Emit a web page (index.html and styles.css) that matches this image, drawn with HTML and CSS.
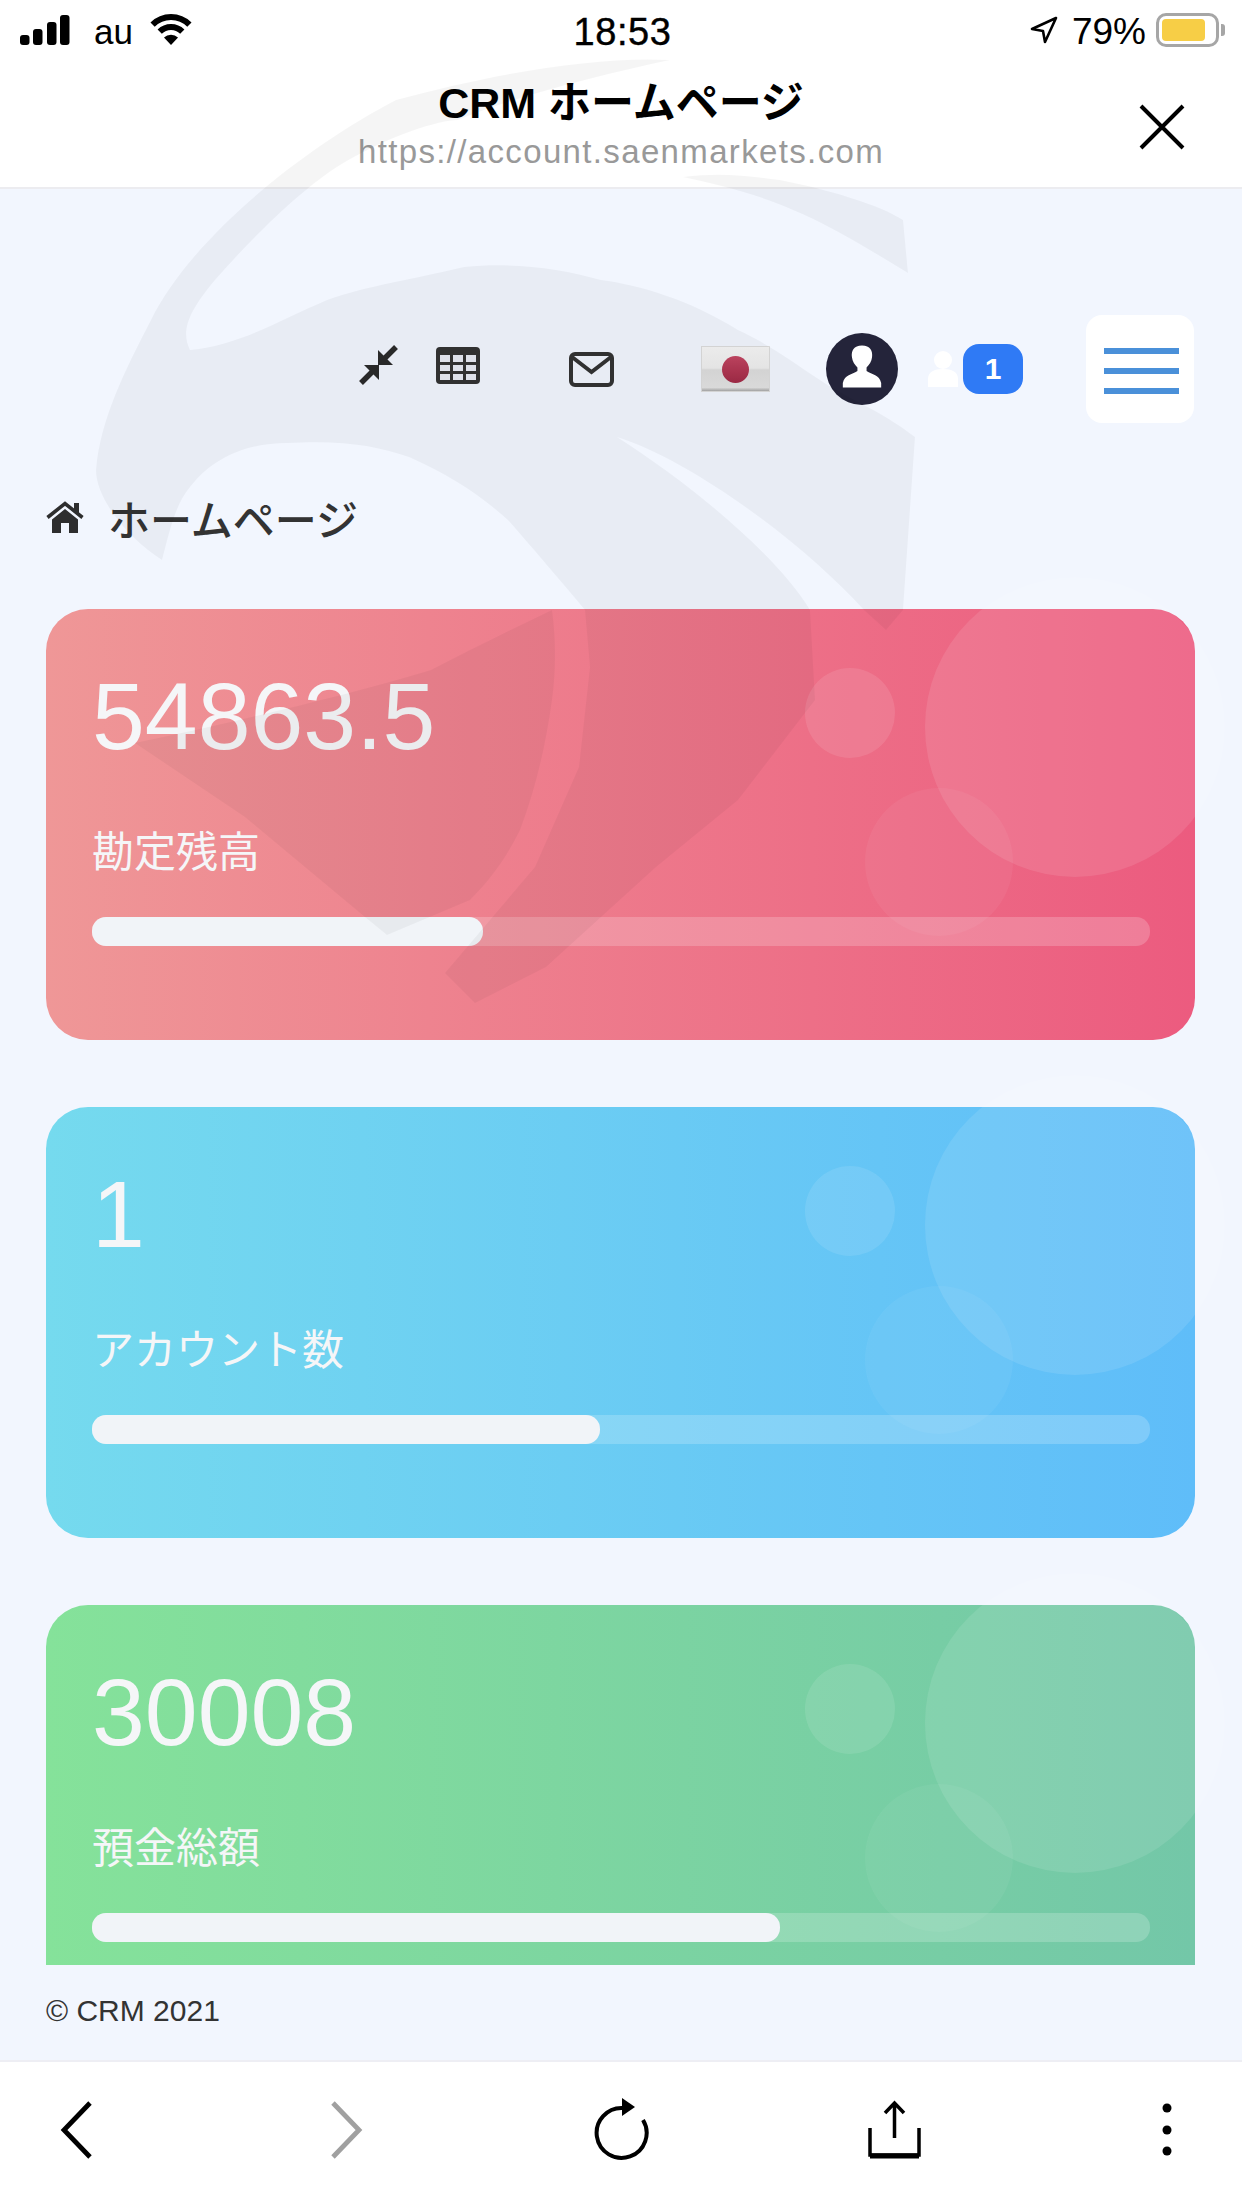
FILE: index.html
```html
<!DOCTYPE html>
<html lang="ja">
<head>
    <meta charset="UTF-8">
    <meta name="viewport" content="width=device-width, initial-scale=1.0">
    <title>CRM ホームページ</title>
    <link rel="stylesheet" href="styles.css">
</head>
<body>
    <!-- phone status bar -->
    <div class="status_bar">
        <div class="status_left">
            <svg class="signal" viewBox="0 0 50 30"><rect x="0" y="20" width="9.5" height="10" rx="3"/><rect x="13" y="14" width="9.5" height="16" rx="3"/><rect x="27" y="7" width="9.5" height="23" rx="3"/><rect x="40" y="0" width="9.5" height="30" rx="3"/></svg>
            <span class="carrier">au</span>
            <svg class="wifi" viewBox="0 0 44 32"><path d="M3.6 11.6A26 26 0 0 1 40.4 11.6M10.7 18.7A16 16 0 0 1 33.3 18.7" fill="none" stroke="#000" stroke-width="6"/><path d="M22 32L15 24.5A10 10 0 0 1 29 24.5Z"/></svg>
        </div>
        <div class="clock">18:53</div>
        <div class="status_right">
            <svg class="location" viewBox="0 0 28 28"><path d="M26 2L2 13L13 15L15 26Z" fill="none" stroke="#000" stroke-width="2.6" stroke-linejoin="round"/></svg>
            <span class="percent">79%</span>
            <div class="battery"><div class="battery_fill"></div></div>
            <div class="battery_nub"></div>
        </div>
    </div>

    <!-- in-app browser title -->
    <div class="title_bar">
        <div></div>
        <div class="title_text">
            <div class="page_title">CRM ホームページ</div>
            <div class="page_url">https://account.saenmarkets.com</div>
        </div>
        <svg class="close_icon" viewBox="0 0 46 46"><path d="M2 2L44 44M44 2L2 44" stroke="#000" stroke-width="4" fill="none"/></svg>
    </div>

    <div class="main">
        <div class="toolbar">
            <svg class="tool_compress" viewBox="0 0 41 42" fill="#2b2b2b"><path d="M20 6V21H35Z"/><path d="M6 21H21V36Z"/><path d="M25 16L38 3M16 26L3 39" stroke="#2b2b2b" stroke-width="5.5" fill="none"/></svg>
            <svg class="tool_table" viewBox="0 0 44 37"><rect width="44" height="37" rx="4" fill="#333"/><g fill="#e8ebf4"><rect x="4" y="8" width="10" height="7"/><rect x="17" y="8" width="10" height="7"/><rect x="30" y="8" width="10" height="7"/><rect x="4" y="18" width="10" height="6"/><rect x="17" y="18" width="10" height="6"/><rect x="30" y="18" width="10" height="6"/><rect x="4" y="27" width="10" height="6"/><rect x="17" y="27" width="10" height="6"/><rect x="30" y="27" width="10" height="6"/></g></svg>
            <svg class="tool_mail" viewBox="0 0 45 35" fill="none" stroke="#333" stroke-width="4"><rect x="2" y="2" width="41" height="31" rx="4"/><path d="M3 5L22.500 20L42 5"/></svg>
            <div class="flag"><div class="flag_dot"></div></div>
            <div class="avatar">
                <svg viewBox="0 0 46 46" fill="#fff"><path d="M23 0C14 0 11 6 12 13C12.500 18 15 21 18 24V28C12 32 4 32 2 41V46H44V41C42 32 34 32 28 28V24C31 21 33.500 18 34 13C35 6 32 0 23 0Z"/></svg>
            </div>
            <svg class="tool_person" viewBox="0 0 30 36" fill="#fff"><circle cx="15" cy="9" r="9"/><path d="M0 36V28C0 21 6 18 15 18S30 21 30 28V36Z"/></svg>
            <div class="badge">1</div>
            <div class="menu_btn"><span></span><span></span><span></span></div>
        </div>

        <div class="breadcrumb">
            <svg class="home_icon" viewBox="0 0 38 32" fill="#2e2e2e"><path d="M1.500 16.500L19 2.500L36.500 16.500" fill="none" stroke="#2e2e2e" stroke-width="3.600"/><rect x="28" y="2" width="5" height="10"/><path d="M19 8L32 18.500V32H23V22H15V32H6V18.500Z"/></svg>
            <span>ホームページ</span>
        </div>

        <div class="stat_card card_red">
            <span class="bubble bubble_big"></span>
            <span class="bubble bubble_small"></span>
            <span class="bubble bubble_mid"></span>
            <div class="stat_value">54863.5</div>
            <div class="stat_label">勘定残高</div>
            <div class="stat_track"><div class="stat_fill" style="width:37%"></div></div>
        </div>

        <div class="stat_card card_blue">
            <span class="bubble bubble_big"></span>
            <span class="bubble bubble_small"></span>
            <span class="bubble bubble_mid"></span>
            <div class="stat_value">1</div>
            <div class="stat_label">アカウント数</div>
            <div class="stat_track"><div class="stat_fill" style="width:48%"></div></div>
        </div>

        <div class="stat_card card_green">
            <span class="bubble bubble_big"></span>
            <span class="bubble bubble_small"></span>
            <span class="bubble bubble_mid"></span>
            <div class="stat_value">30008</div>
            <div class="stat_label">預金総額</div>
            <div class="stat_track"><div class="stat_fill" style="width:65%"></div></div>
        </div>
    </div>

    <div class="copyright">© CRM 2021</div>

    <div class="bottom_bar">
        <svg class="nav_icon nav_back" viewBox="0 0 60 64" fill="none" stroke="#000" stroke-width="4.800"><path d="M43 5L17 32L43 59"/></svg>
        <svg class="nav_icon nav_forward" viewBox="0 0 60 64" fill="none" stroke="#a0a0a0" stroke-width="4.800"><path d="M17 5L43 32L17 59"/></svg>
        <svg class="nav_icon" viewBox="0 0 60 64" fill="none" stroke="#000" stroke-width="4"><path d="M32 10A25 25 0 1 0 52 22"/><path d="M31 0L44 9L31 18Z" fill="#000" stroke="none"/></svg>
        <svg class="nav_icon" viewBox="0 0 60 64" fill="none" stroke="#000" stroke-width="3.500"><path d="M6 30V57H55V30" /><path d="M6 58H55" stroke-width="5"/><path d="M30.500 7V40M21 15L30.500 5L40 15"/></svg>
        <svg class="nav_icon" viewBox="0 0 60 64" fill="#000"><circle cx="30" cy="10" r="4.500"/><circle cx="30" cy="32" r="4.500"/><circle cx="30" cy="53" r="4.500"/></svg>
    </div>

    <!-- faint company mark laid over the page -->
    <svg class="watermark" viewBox="0 0 1242 1100">
        <path d="M670 60C600 56 500 72 396 100C300 150 190 240 151 320C125 370 100 420 96 470C96 500 130 540 162 560C170 530 175 505 190 487C215 455 250 443 288 443C340 440 375 445 409 457C450 475 480 495 508 520C530 545 560 580 585 610L590 667L579 767L535 867L445 973L475 1003L546 967L656 867L738 800L815 700L810 610C780 560 700 490 617 437C690 460 800 540 864 610L886 630L903 610L915 437C880 410 850 400 820 380C790 360 770 345 738 330C690 300 640 285 601 280C560 268 510 262 464 267C410 280 370 285 327 300C280 320 240 345 190 350C180 330 190 310 215 280C250 240 300 190 340 165C390 135 440 120 458 120C520 95 600 75 670 60Z"/>
        <path d="M683 177C720 172 750 176 780 180C830 190 880 205 903 220L908 273C870 250 830 225 793 210C760 195 720 185 683 177Z"/>
        <path d="M135 743C220 725 330 700 431 670C470 650 510 630 552 610C556 640 556 670 552 700C545 750 535 790 520 830C505 860 490 880 470 900L387 935L365 917L245 817Z"/>
    </svg>
</body>
</html>
```

FILE: styles.css
```css
body {
    font-family: "Liberation Sans", "Noto Sans CJK JP", sans-serif;
    background-color: #f2f6fe;
    margin: 0;
    padding: 0;
    width: 1242px;
    height: 2208px;
    overflow: hidden;
    position: relative;
    display: flex;
    flex-direction: column;
    color: #333;
}

/* status bar */
.status_bar {
    height: 60px;
    background-color: #fff;
    display: grid;
    grid-template-columns: 1fr auto 1fr;
    align-items: center;
    padding: 0 17px 0 20px;
    color: #000;
}

.status_left,
.status_right {
    display: flex;
    align-items: center;
}

.status_right {
    justify-content: flex-end;
}

.signal {
    width: 50px;
    height: 30px;
}

.carrier {
    font-size: 35px;
    line-height: 40px;
    margin-left: 24px;
    padding-top: 3px;
}

.wifi {
    width: 44px;
    height: 32px;
    margin-left: 16px;
    margin-bottom: 2px;
}

.clock {
    font-size: 38px;
    line-height: 40px;
    letter-spacing: 0.6px;
    padding-top: 3px;
    -webkit-text-stroke: 0.4px #000;
}

.location {
    width: 28px;
    height: 28px;
}

.percent {
    font-size: 37px;
    line-height: 40px;
    margin-left: 14px;
    padding-top: 4px;
}

.battery {
    width: 63px;
    height: 34px;
    margin-left: 10px;
    border: 3px solid #a6a6a6;
    border-radius: 10px;
    box-sizing: border-box;
    padding: 3px;
}

.battery_fill {
    width: 43px;
    height: 22px;
    background-color: #f7ce46;
    border-radius: 4px;
}

.battery_nub {
    width: 4px;
    height: 12px;
    margin-left: 2px;
    background-color: #a6a6a6;
    border-radius: 0 3px 3px 0;
}

/* title bar */
.title_bar {
    height: 129px;
    box-sizing: border-box;
    background-color: #fff;
    border-bottom: 2px solid #ececf0;
    display: grid;
    grid-template-columns: 1fr auto 1fr;
    align-items: center;
    padding: 0 57px;
}

.title_text {
    text-align: center;
    padding-top: 4px;
}

.page_title {
    font-size: 43px;
    font-weight: bold;
    line-height: 50px;
    color: #000;
}

.page_url {
    font-size: 33px;
    line-height: 44px;
    letter-spacing: 1.35px;
    color: #999;
    margin-top: 2px;
}

.close_icon {
    width: 46px;
    height: 46px;
    justify-self: end;
    margin-top: 6px;
}

/* scrolling content */
.main {
    flex: 1;
    overflow: hidden;
    padding: 125px 47px 0 46px;
}

.toolbar {
    display: flex;
    justify-content: flex-end;
    align-items: center;
    height: 108px;
    margin-top: 1px;
    margin-right: 1px;
}

.tool_compress {
    width: 41px;
    height: 42px;
    margin-bottom: 8px;
}

.tool_table {
    width: 44px;
    height: 37px;
    margin-left: 37px;
    margin-bottom: 7px;
}

.tool_mail {
    width: 45px;
    height: 35px;
    margin-left: 89px;
}

.flag {
    width: 69px;
    height: 46px;
    margin-left: 87px;
    display: flex;
    align-items: center;
    justify-content: center;
    box-sizing: border-box;
    background: linear-gradient(#f5f5f5 0%, #eeeeee 48%, #dcdcdc 52%, #e2e2e2 92%, #a8a8a8 100%);
    border: 1px solid #dcdcdc;
}

.flag_dot {
    width: 27px;
    height: 27px;
    border-radius: 50%;
    background: linear-gradient(#c34662, #a12a46);
}

.avatar {
    width: 72px;
    height: 72px;
    margin-left: 56px;
    border-radius: 50%;
    background-color: #24243a;
    display: flex;
    justify-content: center;
    align-items: flex-end;
}

.avatar svg {
    width: 42px;
    height: 45px;
    margin-bottom: 16px;
}

.tool_person {
    width: 30px;
    height: 38px;
    margin-left: 30px;
}

.badge {
    width: 60px;
    height: 50px;
    margin-left: 5px;
    border-radius: 16px;
    background-color: #2f7af5;
    color: #fff;
    font-size: 30px;
    font-weight: bold;
    line-height: 50px;
    text-align: center;
}

.menu_btn {
    width: 108px;
    height: 108px;
    margin-left: 63px;
    background-color: #fff;
    border-radius: 16px;
    box-sizing: border-box;
    padding: 33px 15px 0 18px;
}

.menu_btn span {
    display: block;
    height: 6px;
    background-color: #4a90d9;
    margin-bottom: 14px;
}

.breadcrumb {
    display: flex;
    align-items: center;
    height: 60px;
    margin-top: 64px;
    margin-bottom: 62px;
    font-size: 42px;
    font-weight: 500;
    color: #333;
}

.home_icon {
    width: 38px;
    height: 32px;
    margin-right: 24px;
}

/* stat cards */
.stat_card {
    position: relative;
    height: 431px;
    box-sizing: border-box;
    border-radius: 42px;
    padding: 59px 45px 0 46px;
    margin-bottom: 67px;
    color: #f5f6f8;
}

.card_red {
    background: linear-gradient(to right, #ef9797, #ec5b7f);
}

.card_blue {
    background: linear-gradient(to right, #75daee, #5fbdf9);
}

.card_green {
    background: linear-gradient(to right, #85e29a, #73c7a8);
}

.bubble {
    position: absolute;
    border-radius: 50%;
    background-color: rgba(255, 255, 255, 0.1);
}

.bubble_big {
    width: 300px;
    height: 300px;
    left: 879px;
    top: -32px;
}

.bubble_small {
    width: 90px;
    height: 90px;
    left: 759px;
    top: 59px;
}

.bubble_mid {
    width: 148px;
    height: 148px;
    left: 819px;
    top: 179px;
    background-color: rgba(255, 255, 255, 0.05);
}

.stat_value {
    font-size: 95px;
    line-height: 96px;
}

.stat_label {
    font-size: 42px;
    line-height: 42px;
    margin-top: 68px;
}

.stat_track {
    height: 29px;
    margin-top: 43px;
    border-radius: 14px;
    background-color: rgba(255, 255, 255, 0.2);
}

.stat_fill {
    height: 29px;
    border-radius: 14px;
    background-color: #f1f4f8;
}

/* footer */
.copyright {
    height: 95px;
    box-sizing: border-box;
    padding: 27px 0 0 46px;
    font-size: 30px;
    line-height: 38px;
    color: #333;
}

.bottom_bar {
    height: 148px;
    box-sizing: border-box;
    background-color: #fff;
    border-top: 2px solid #eeeef4;
    padding: 36px 45px 0;
    display: flex;
    justify-content: space-between;
    align-items: flex-start;
}

.nav_icon {
    width: 60px;
    height: 64px;
}

.nav_back {
    margin-left: 2px;
    margin-right: -2px;
}

.nav_forward {
    margin-left: -2px;
    margin-right: 2px;
}

.watermark {
    position: absolute;
    left: 0;
    top: 0;
    width: 1242px;
    height: 1100px;
    fill: rgba(0, 0, 0, 0.04);
    pointer-events: none;
}
```
